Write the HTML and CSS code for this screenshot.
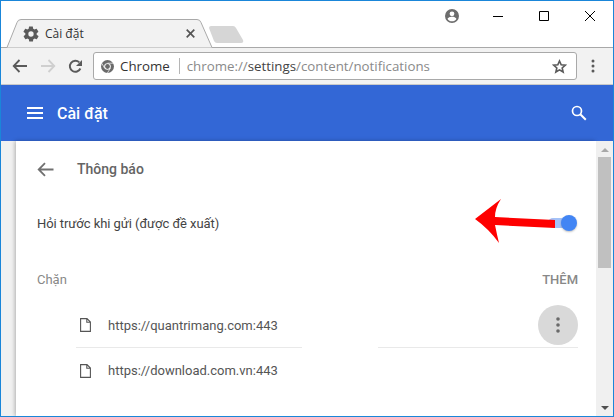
FILE: index.html
```html
<!DOCTYPE html>
<html lang="vi">
<head>
<meta charset="utf-8">
<title>Cài đặt</title>
<link rel="stylesheet" href="styles.css">
</head>
<body>
<div class="window">
  <div class="titlebar">
    <div class="tab">
      <svg class="tab-shape" width="214" height="29" viewBox="0 0 214 29"><path d="M0 28.500H7L17 3.500Q18 .5 21 .5H197Q200 .5 201 3.500L212 28.500H214" fill="#f2f2f2" stroke="#a9a9a9"/></svg>
      <svg class="ic tab-gear" width="16" height="16" viewBox="1.500 1.500 21 21"><path fill="#5a5a5a" d="M19.400 13c0-.3.1-.6.1-1s0-.7-.1-1l2.100-1.600c.2-.1.2-.4.1-.6l-2-3.500c-.1-.2-.4-.3-.6-.2l-2.500 1c-.5-.4-1.100-.7-1.700-1l-.4-2.600c0-.3-.2-.5-.5-.5h-4c-.3 0-.5.2-.5.4l-.4 2.700c-.6.2-1.200.6-1.700 1l-2.500-1c-.2-.1-.5 0-.6.2l-2 3.500c-.1.2-.1.5.1.6L4.600 11c0 .3-.1.6-.1 1s0 .7.1 1l-2.100 1.600c-.2.1-.2.4-.1.6l2 3.500c.1.2.4.3.6.2l2.500-1c.5.4 1.100.7 1.700 1l.4 2.600c0 .3.2.5.5.5h4c.3 0 .5-.2.5-.4l.4-2.700c.6-.2 1.200-.6 1.700-1l2.500 1c.2.1.5 0 .6-.2l2-3.500c.1-.2.1-.5-.1-.6L19.400 13zM12 15.500a3.500 3.500 0 1 1 0-7 3.500 3.500 0 0 1 0 7z"/></svg>
      <span class="tab-title">Cài đặt</span>
      <svg class="ic tab-close" width="9" height="9" viewBox="0 0 9 9"><path d="M.7.7l7.600 7.600M8.300.7L.7 8.300" stroke="#555" stroke-width="1.700"/></svg>
    </div>
    <svg class="ic newtab" width="35" height="18" viewBox="0 0 35 18"><path fill="#d6d6d6" d="M2 0H24Q26 0 27 2L34 14Q35 17 32 17H8Q6 17 5 15L0 2Q0 0 2 0z"/></svg>
    <div class="winctl">
      <svg class="ic profile" width="14" height="14" viewBox="0 0 14 14"><path fill="#6d6d6d" d="M7 0a7 7 0 1 0 0 14A7 7 0 0 0 7 0zm0 2.400a2.400 2.400 0 1 1 0 4.800 2.400 2.400 0 0 1 0-4.800zM7 12.300c-1.900 0-3.500-.9-4.400-2.300 0-1.400 2.900-2.200 4.400-2.200s4.400.8 4.400 2.200c-.9 1.400-2.500 2.300-4.400 2.300z"/></svg>
      <span class="ctl"><svg class="ic" width="10" height="10" viewBox="0 0 10 10"><path d="M0 5.500h10" stroke="#000"/></svg></span>
      <span class="ctl"><svg class="ic" width="10" height="10" viewBox="0 0 10 10"><path d="M.5.5h9v9h-9z" fill="none" stroke="#000"/></svg></span>
      <span class="ctl"><svg class="ic" width="10" height="10" viewBox="0 0 10 10"><path d="M0 0l10 10M10 0L0 10" stroke="#000"/></svg></span>
    </div>
  </div>

  <div class="toolbar">
    <svg class="ic nav" width="16" height="14" viewBox="0 0 16 14"><path d="M15 7H2M7.500 1L1.700 7l5.800 6" fill="none" stroke="#5a5a5a" stroke-width="1.800"/></svg>
    <svg class="ic nav" width="16" height="14" viewBox="0 0 16 14"><path d="M1 7h13M8.500 1l5.800 6-5.800 6" fill="none" stroke="#cfcfcf" stroke-width="1.800"/></svg>
    <svg class="ic nav" width="15" height="15" viewBox="0 0 15 15"><path d="M12.400 9.500A5.500 5.500 0 1 1 11.300 3.400" fill="none" stroke="#5a5a5a" stroke-width="1.900"/><path d="M14 1v6H8z" fill="#5a5a5a"/></svg>
    <div class="omnibox">
      <svg class="ic chrome-logo" width="13" height="13" viewBox="0 0 13 13"><circle cx="6.500" cy="6.500" r="6.500" fill="#6a6a6a"/><circle cx="6.500" cy="6.500" r="3.300" fill="#fff"/><circle cx="6.500" cy="6.500" r="2.400" fill="#6a6a6a"/><path d="M6.500 3.200h6M3.600 8.200L.8 3.300M9.400 8.200L6.400 13" stroke="#fff" stroke-width=".7"/></svg>
      <span class="origin">Chrome</span>
      <span class="omni-sep"></span>
      <span class="url">chrome://<span class="url-host">settings</span>/content/notifications</span>
      <svg class="ic star" width="15" height="15" viewBox="0 0 24 24"><path fill="none" stroke="#5a5a5a" stroke-width="2.600" d="M12 3.200l2.700 6.100 6.600.6-5 4.400 1.500 6.500-5.800-3.400-5.800 3.400 1.500-6.500-5-4.400 6.600-.6z"/></svg>
    </div>
    <svg class="ic kebab" width="4" height="14" viewBox="0 0 4 14"><circle cx="2" cy="2" r="1.500" fill="#5a5a5a"/><circle cx="2" cy="7" r="1.500" fill="#5a5a5a"/><circle cx="2" cy="12" r="1.500" fill="#5a5a5a"/></svg>
  </div>

  <header class="appbar">
    <svg class="ic menu" width="16" height="12" viewBox="0 0 16 12"><path d="M0 1h16M0 6h16M0 11h16" stroke="#fff" stroke-width="1.800"/></svg>
    <span class="appbar-title">Cài đặt</span>
    <svg class="ic search" width="16" height="16" viewBox="0 0 16 16"><circle cx="6" cy="6" r="4.500" fill="none" stroke="#fff" stroke-width="1.700"/><path d="M9.300 9.300l5.500 5.500" stroke="#fff" stroke-width="2"/></svg>
  </header>

  <div class="body">
    <main class="card">
      <div class="page-head">
        <svg class="ic back" width="17" height="15" viewBox="0 0 17 15"><path d="M16.500 7.500H2M8 1.200L1.700 7.500 8 13.800" fill="none" stroke="#707070" stroke-width="1.800"/></svg>
        <h1 class="page-title">Thông báo</h1>
      </div>
      <div class="ask-row">
        <span class="ask-label">Hỏi trước khi gửi (được đề xuất)</span>
        <span class="toggle"><span class="knob"></span></span>
      </div>
      <div class="block-head">
        <span>Chặn</span>
        <span class="add">THÊM</span>
      </div>
      <ul class="sites">
        <li class="site">
          <svg class="ic file" width="11" height="14" viewBox="0 0 11 14"><path d="M.6.600h6.400l3.400 3.400v9.400H.6zM6.800.600v3.600h3.600" fill="none" stroke="#555" stroke-width="1.100"/></svg>
          <span class="site-url">https://quantrimang.com:443</span>
          <span class="more">
            <svg class="ic" width="4" height="16" viewBox="0 0 4 16"><circle cx="2" cy="2" r="1.800" fill="#6a6a6a"/><circle cx="2" cy="8" r="1.800" fill="#6a6a6a"/><circle cx="2" cy="14" r="1.800" fill="#6a6a6a"/></svg>
          </span>
        </li>
        <li class="site">
          <svg class="ic file" width="11" height="14" viewBox="0 0 11 14"><path d="M.6.600h6.400l3.400 3.400v9.400H.6zM6.800.600v3.600h3.600" fill="none" stroke="#555" stroke-width="1.100"/></svg>
          <span class="site-url">https://download.com.vn:443</span>
        </li>
      </ul>
    </main>
    <div class="scrollbar">
      <span class="sb-up"></span>
      <span class="sb-thumb"></span>
      <span class="sb-down"></span>
    </div>
  </div>

  <svg class="red-arrow" width="82" height="46" viewBox="0 0 82 46"><path fill="#fe0000" d="M0 20L26 0Q20 9 20 18L80 21V29L20 26Q22 36 24 44Q14 30 0 20z"/></svg>
</div>
</body>
</html>
```

FILE: styles.css
```css
* { box-sizing: border-box; }
html, body { margin: 0; padding: 0; }
body { width: 614px; height: 417px; overflow: hidden; background: #fff; }
.ic { display: block; flex: none; }

.window {
  position: relative;
  width: 614px;
  height: 417px;
  border: 1px solid #1a86d9;
  display: flex;
  flex-direction: column;
  overflow: hidden;
  font-family: Roboto, sans-serif;
}

.titlebar {
  height: 47px;
  flex: none;
  display: flex;
  align-items: flex-end;
  border-bottom: 1px solid #a9a9a9;
  background: #fff;
}
.tab {
  position: relative;
  width: 214px;
  height: 29px;
  margin-left: -1px;
  margin-bottom: -1px;
  display: flex;
  align-items: center;
  flex: none;
  padding: 0 0 0 23px;
}
.tab-shape { position: absolute; left: 0; top: 0; }
.tab-gear, .tab-title, .tab-close { position: relative; }
.tab-title {
  margin-left: 6px;
  font: 12px "Open Sans", sans-serif;
  color: #333;
}
.tab-close { margin-left: auto; margin-right: 19px; }
.newtab {
  margin-left: -5px;
  margin-bottom: 3px;
}
.winctl {
  margin-left: auto;
  align-self: flex-start;
  display: flex;
  align-items: center;
  height: 30px;
}
.profile { margin-right: 16px; }
.ctl { width: 46px; height: 30px; display: flex; align-items: center; justify-content: center; }

.toolbar {
  height: 37px;
  flex: none;
  background: #f2f2f2;
  display: flex;
  align-items: center;
  padding: 0 0 0 11px;
  border-bottom: 1px solid #c9c9c9;
}
.nav { margin-right: 12px; }
.omnibox {
  width: 484px;
  height: 28px;
  margin-left: -2px;
  background: #fff;
  border: 1px solid #a9a9a9;
  border-radius: 3px;
  display: flex;
  align-items: center;
  padding: 0 9px 0 7px;
  flex: none;
}
.origin { margin-left: 6px; font: 13.3px "Open Sans", sans-serif; color: #333; }
.omni-sep { width: 1px; height: 16px; background: #b5b5b5; margin: 0 7px 0 9px; }
.url { font: 13.3px "Open Sans", sans-serif; color: #8a8a8a; white-space: nowrap; }
.url-host { color: #444; }
.star { margin-left: auto; }
.kebab { margin-left: 14px; }

.appbar {
  height: 56px;
  flex: none;
  background: #3367d6;
  display: flex;
  align-items: center;
  padding: 0 26px;
  color: #fff;
}
.appbar-title { margin-left: 14px; font-size: 16px; font-weight: 500; }
.search { margin-left: auto; }

.body { flex: 1; display: flex; min-height: 0; background: #f1f1f1; padding-left: 15px; }
.card {
  flex: 1;
  background: #fff;
  box-shadow: -1px 0 4px rgba(0, 0, 0, .28);
  padding: 0 18px 0 21px;
  min-width: 0;
}
.page-head { height: 56px; display: flex; align-items: center; }
.page-title { margin: 0 0 0 23px; font-size: 14px; font-weight: 500; color: #646464; }
.ask-row { height: 52px; display: flex; align-items: center; justify-content: space-between; }
.ask-label { font-size: 13px; color: #444; letter-spacing: -.06px; }
.toggle {
  position: relative;
  width: 28px;
  height: 10px;
  border-radius: 5px;
  background: #a4c2f8;
  margin-right: 2px;
}
.knob {
  position: absolute;
  right: -1px;
  top: -3px;
  width: 16px;
  height: 16px;
  border-radius: 50%;
  background: #4285f4;
  box-shadow: 0 1px 2px rgba(0, 0, 0, .25);
}
.block-head {
  margin-top: 22px;
  height: 16px;
  display: flex;
  align-items: center;
  justify-content: space-between;
  font-size: 13px;
  color: #888;
}
.add { font-weight: 500; }
.sites { list-style: none; margin: 16px 0 0 39px; padding: 0; }
.site {
  height: 45px;
  display: flex;
  align-items: center;
  padding-left: 4px;
  font-size: 13px;
  color: #555;
}
.site:first-child {
  padding-bottom: 1px;
  background: linear-gradient(to right, #e9e9e9 226px, transparent 226px, transparent 302px, #e9e9e9 302px) left bottom / 100% 1px no-repeat;
}
.site-url { margin-left: 17px; }
.more {
  margin-left: auto;
  width: 40px;
  height: 40px;
  border-radius: 50%;
  background: #d9d9d9;
  display: flex;
  align-items: center;
  justify-content: center;
}

.scrollbar {
  width: 17px;
  flex: none;
  background: #f0f0f0;
  display: flex;
  flex-direction: column;
  align-items: center;
  padding: 7px 0 6px;
}
.sb-up { width: 0; height: 0; border: 4px solid transparent; border-top: 0; border-bottom: 4px solid #a8a8a8; flex: none; }
.sb-thumb { width: 13px; height: 111px; background: #c0c0c0; margin-top: 5px; flex: none; }
.sb-down { margin-top: auto; width: 0; height: 0; border: 4px solid transparent; border-bottom: 0; border-top: 4px solid #505050; flex: none; }

.red-arrow { position: absolute; left: 474px; top: 198px; }
```
